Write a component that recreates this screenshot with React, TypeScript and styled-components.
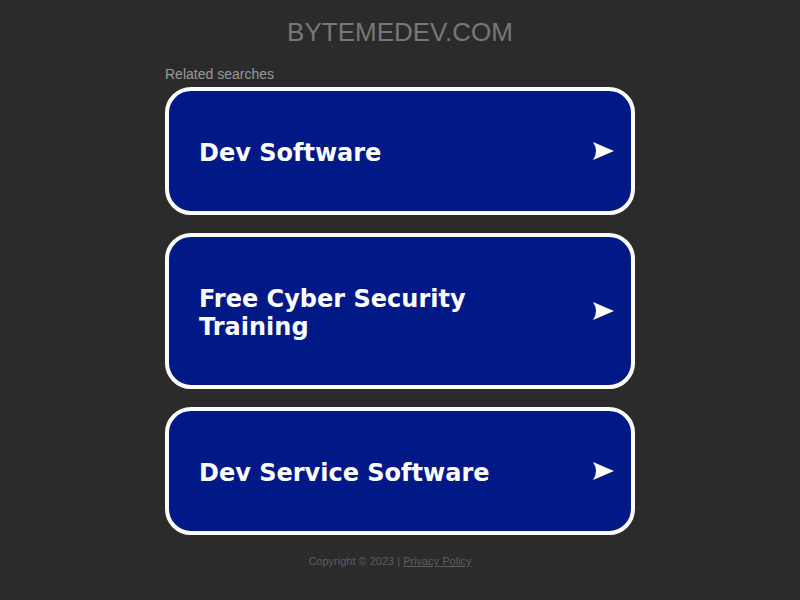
import React from "react";
import styled, { createGlobalStyle } from "styled-components";

const Global = createGlobalStyle`
  html, body { margin: 0; padding: 0; background: #2b2b2b; }
  body { font-family: "Liberation Sans", Arial, sans-serif; }
`;

const Page = styled.div`
  width: 800px;
  min-height: 600px;
  display: flex;
  flex-direction: column;
  align-items: center;
`;

const Domain = styled.h1`
  margin: 17px 0 0;
  font-family: "Liberation Sans", Arial, sans-serif;
  font-weight: 400;
  font-size: 26px;
  line-height: 30px;
  color: #777777;
  letter-spacing: 0;
`;

const Section = styled.div`
  width: 470px;
  margin-top: 19px;
  display: flex;
  flex-direction: column;
`;

const Label = styled.div`
  font-size: 14px;
  line-height: 16px;
  color: #999999;
  margin-bottom: 5px;
`;

const List = styled.div`
  display: flex;
  flex-direction: column;
  gap: 18px;
`;

const Card = styled.a`
  display: flex;
  align-items: center;
  box-sizing: border-box;
  border: 4px solid #ffffff;
  border-radius: 26px;
  background: #011987;
  padding: 48px 17px 44px 30px;
  text-decoration: none;
  cursor: pointer;
`;

const CardText = styled.span`
  flex: 1;
  max-width: 360px;
  font-family: "DejaVu Sans", Verdana, sans-serif;
  font-weight: 700;
  font-size: 24px;
  line-height: 28px;
  color: #ffffff;
`;

const Arrow = styled.svg`
  margin-left: auto;
  margin-top: -4px;
  width: 21px;
  height: 18px;
  flex-shrink: 0;
`;

const Footer = styled.div`
  margin-top: 20px;
  padding-right: 20px;
  font-size: 11px;
  color: #5e5e5e;
`;

const FooterLink = styled.a`
  color: #5e5e5e;
  text-decoration: underline;
`;

const items = ["Dev Software", "Free Cyber Security Training", "Dev Service Software"];

export default function App() {
  return (
    <Page>
      <Global />
      <Domain>BYTEMEDEV.COM</Domain>
      <Section>
        <Label>Related searches</Label>
        <List>
          {items.map((t) => (
            <Card key={t}>
              <CardText>{t}</CardText>
              <Arrow viewBox="0 0 21 18">
                <path d="M0 0 L21 9 L0 18 Q6 9 0 0 Z" fill="#ffffff" />
              </Arrow>
            </Card>
          ))}
        </List>
      </Section>
      <Footer>
        Copyright © 2023 | <FooterLink>Privacy Policy</FooterLink>
      </Footer>
    </Page>
  );
}
